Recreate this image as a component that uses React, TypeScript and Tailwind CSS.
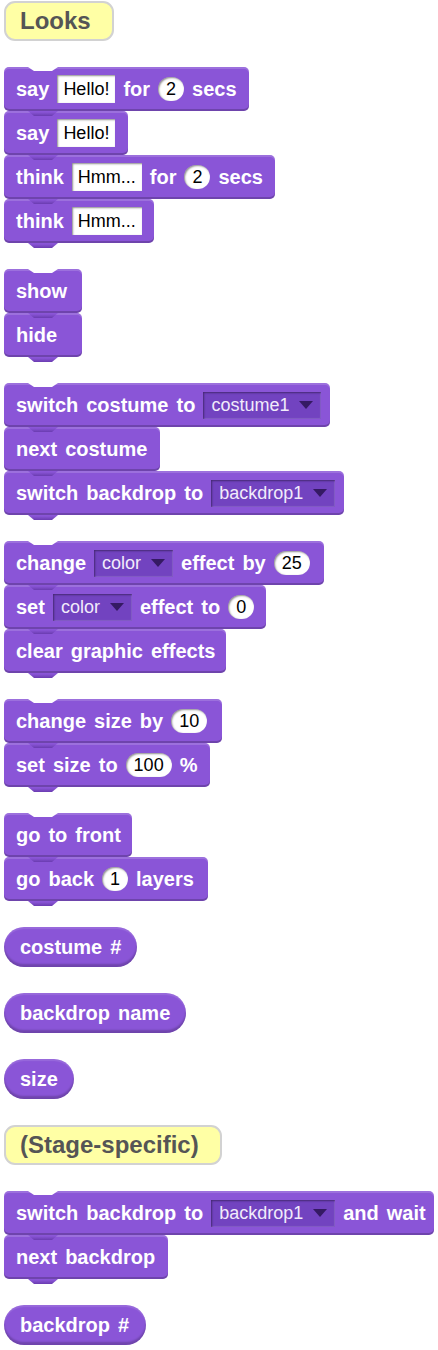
import type { ReactNode } from 'react'

const font = { fontFamily: '"Liberation Sans", Arial, sans-serif' }

function Label({ className, children }: { className: string; children: ReactNode }) {
  return (
    <div className={`flex h-[40px] items-center rounded-[11px] border-2 border-[#d2d2d2] bg-[#ffffa5] pl-[14px] text-[24px] font-bold text-[#555555] ${className}`}>
      {children}
    </div>
  )
}

function Block({ className, children, first = false }: { className: string; children: ReactNode; first?: boolean }) {
  return (
    <div
      className={`relative flex h-[44px] shrink-0 items-center gap-[8px] rounded-[5px] bg-[#8a55d7] pl-[12px] text-[20px] font-bold text-white shadow-[inset_0_2px_0_rgba(255,255,255,0.16),inset_0_-2px_0_rgba(0,0,0,0.2)] ${className}`}
    >
      {first ? <div className="absolute top-0 left-[24px] h-[4px] w-[30px] bg-white [clip-path:polygon(0_0,100%_0,80%_100%,20%_100%)]" /> : null}
      <div className="absolute top-full left-[24px] z-10 h-[5px] w-[30px] bg-[linear-gradient(#8a55d7_20%,#6a3cb0)] [clip-path:polygon(0_0,100%_0,80%_100%,20%_100%)]" />
      {children}
    </div>
  )
}

function Reporter({ className, children }: { className: string; children: ReactNode }) {
  return (
    <div
      className={`flex h-[40px] items-center gap-[8px] rounded-full bg-[#8a55d7] pl-[16px] text-[20px] font-bold text-white shadow-[inset_0_-3px_2px_rgba(0,0,0,0.2),inset_0_2px_1px_rgba(255,255,255,0.12)] ${className}`}
    >
      {children}
    </div>
  )
}

function TextBox({ value }: { value: string }) {
  return (
    <span className="flex h-[28px] items-center bg-white px-[6px] text-[18px] font-normal text-black shadow-[inset_1px_1px_2px_rgba(0,0,0,0.45)]">
      {value}
    </span>
  )
}

function NumBox({ value }: { value: string }) {
  return (
    <span className="flex h-[24px] items-center rounded-full bg-white px-[8px] text-[18px] font-normal text-black shadow-[inset_1px_1px_2px_rgba(0,0,0,0.45)]">
      {value}
    </span>
  )
}

function Dropdown({ value }: { value: string }) {
  return (
    <span className="flex h-[27px] items-center gap-[10px] bg-[#7243c0] px-[8px] text-[18px] font-normal text-[#f1ebfb] shadow-[inset_1px_1px_2px_rgba(0,0,0,0.4),inset_-1px_-1px_1px_rgba(255,255,255,0.15)]">
      {value}
      <span className="h-0 w-0 border-x-[7px] border-t-[8px] border-x-transparent border-t-[#351a63]" />
    </span>
  )
}

function Stack({ children }: { children: ReactNode }) {
  return <div className="flex flex-col items-start">{children}</div>
}

export default function App() {
  return (
    <div className="flex min-h-[1350px] flex-col items-start gap-[26px] bg-white pt-[1px] pl-[4px]" style={font}>
      <Label className="w-[110px]">Looks</Label>

      <Stack>
        <Block className="w-[245px]" first>
          <span>say</span>
          <TextBox value="Hello!" />
          <span>for</span>
          <NumBox value="2" />
          <span>secs</span>
        </Block>
        <Block className="w-[124px]">
          <span>say</span>
          <TextBox value="Hello!" />
        </Block>
        <Block className="w-[271px]">
          <span>think</span>
          <TextBox value="Hmm..." />
          <span>for</span>
          <NumBox value="2" />
          <span>secs</span>
        </Block>
        <Block className="w-[150px]">
          <span>think</span>
          <TextBox value="Hmm..." />
        </Block>
      </Stack>

      <Stack>
        <Block className="w-[78px]" first>
          <span>show</span>
        </Block>
        <Block className="w-[78px]">
          <span>hide</span>
        </Block>
      </Stack>

      <Stack>
        <Block className="w-[326px]" first>
          <span>switch</span>
          <span>costume</span>
          <span>to</span>
          <Dropdown value="costume1" />
        </Block>
        <Block className="w-[156px]">
          <span>next</span>
          <span>costume</span>
        </Block>
        <Block className="w-[340px]">
          <span>switch</span>
          <span>backdrop</span>
          <span>to</span>
          <Dropdown value="backdrop1" />
        </Block>
      </Stack>

      <Stack>
        <Block className="w-[320px]" first>
          <span>change</span>
          <Dropdown value="color" />
          <span>effect</span>
          <span>by</span>
          <NumBox value="25" />
        </Block>
        <Block className="w-[262px]">
          <span>set</span>
          <Dropdown value="color" />
          <span>effect</span>
          <span>to</span>
          <NumBox value="0" />
        </Block>
        <Block className="w-[222px]">
          <span>clear</span>
          <span>graphic</span>
          <span>effects</span>
        </Block>
      </Stack>

      <Stack>
        <Block className="w-[218px]" first>
          <span>change</span>
          <span>size</span>
          <span>by</span>
          <NumBox value="10" />
        </Block>
        <Block className="w-[206px]">
          <span>set</span>
          <span>size</span>
          <span>to</span>
          <NumBox value="100" />
          <span>%</span>
        </Block>
      </Stack>

      <Stack>
        <Block className="w-[128px]" first>
          <span>go</span>
          <span>to</span>
          <span>front</span>
        </Block>
        <Block className="w-[204px]">
          <span>go</span>
          <span>back</span>
          <NumBox value="1" />
          <span>layers</span>
        </Block>
      </Stack>

      <Reporter className="w-[133px]">
        <span>costume</span>
        <span>#</span>
      </Reporter>

      <Reporter className="w-[182px]">
        <span>backdrop</span>
        <span>name</span>
      </Reporter>

      <Reporter className="w-[70px]">
        <span>size</span>
      </Reporter>

      <Label className="w-[218px]">(Stage-specific)</Label>

      <Stack>
        <Block className="w-[430px]" first>
          <span>switch</span>
          <span>backdrop</span>
          <span>to</span>
          <Dropdown value="backdrop1" />
          <span>and</span>
          <span>wait</span>
        </Block>
        <Block className="w-[164px]">
          <span>next</span>
          <span>backdrop</span>
        </Block>
      </Stack>

      <Reporter className="w-[142px]">
        <span>backdrop</span>
        <span>#</span>
      </Reporter>
    </div>
  )
}
